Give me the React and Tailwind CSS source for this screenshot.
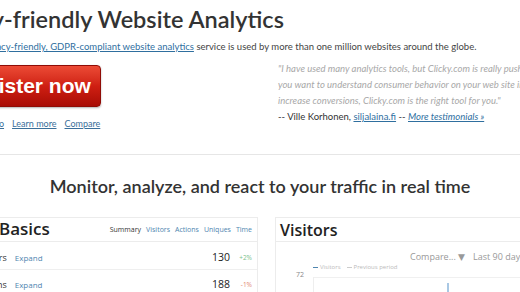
import React from "react";

const basics = [
    { label: "Visitors", value: 130, change: "+2%", up: true },
    { label: "Actions", value: 188, change: "-1%", up: false },
];

const tabs = ["Summary", "Visitors", "Actions", "Uniques", "Time"];

const App = () => {
    return (
        <div className="w-[520px] h-[292px] overflow-hidden bg-white text-[#333] font-['Lato','DejaVu_Sans',sans-serif]">
            {/* Hero */}
            <div className="h-[155px] border-b border-[#e6e6e6]">
                <h1 className="-ml-[72px] pt-[4px] text-[23.5px] leading-[30px] font-semibold text-[#333] whitespace-nowrap">
                    Privacy-friendly Website Analytics
                </h1>
                <p className="-ml-[38px] mt-[6px] text-[9.5px] leading-[14px] text-[#444] whitespace-nowrap">
                    <a href="#" className="text-[#2f6f9f] underline">Our privacy-friendly, GDPR-compliant website analytics</a>{" "}
                    service is used by more than one million websites around the globe.
                </p>

                <div className="flex mt-[7px]">
                    <div className="w-[278px] shrink-0">
                        <button className="mt-[4px] -ml-[56px] h-[42px] pl-[14px] pr-[9px] rounded-[4px] border border-[#8f0c06] bg-gradient-to-b from-[#ec4a35] via-[#cf1f12] to-[#a90c06] text-white text-[21px] font-bold font-['Liberation_Sans',sans-serif] shadow-[0_1px_2px_rgba(0,0,0,0.3)]">
                            Register now
                        </button>
                        <div className="-ml-[20px] mt-[10px] flex gap-[8px] text-[9px] text-[#3a6f9a]">
                            <a href="#" className="underline">Demo</a>
                            <a href="#" className="underline">Learn more</a>
                            <a href="#" className="underline">Compare</a>
                        </div>
                    </div>
                    <div className="text-[9.5px] leading-[16px] whitespace-nowrap">
                        <p className="italic text-[#a8a8a8]">
                            "I have used many analytics tools, but Clicky.com is really pushing the limits. If
                            <br />
                            you want to understand consumer behavior on your web site in order to
                            <br />
                            increase conversions, Clicky.com is the right tool for you."
                        </p>
                        <p className="text-[#333]">
                            -- Ville Korhonen, <a href="#" className="text-[#2f6f9f] underline">siljalaina.fi</a> --{" "}
                            <a href="#" className="italic text-[#2f6f9f] underline">More testimonials »</a>
                        </p>
                    </div>
                </div>
            </div>

            <h2 className="mt-[20px] text-center text-[18px] leading-[22px] font-semibold text-[#333]">
                Monitor, analyze, and react to your traffic in real time
            </h2>

            {/* Panels */}
            <div className="flex mt-[20px] gap-[17px]">
                <div className="-ml-[40px] w-[298px] shrink-0 border border-[#ececec] font-['Open_Sans','DejaVu_Sans',sans-serif]">
                    <div className="flex items-end justify-between h-[24px] pl-[38px] pr-[5px] pb-[2px] border-b border-[#ececec]">
                        <span className="text-[17px] leading-[20px] font-semibold text-[#222]">Basics</span>
                        <div className="flex gap-[5px] text-[7px] text-[#4f86b0] pb-[4px]">
                            {tabs.map((t, i) => (
                                <span key={t} className={i === 0 ? "text-[#333]" : ""}>{t}</span>
                            ))}
                        </div>
                    </div>
                    {basics.map((r, i) => (
                        <div key={r.label} className={"flex items-center h-[28px] pl-[15px] pr-[5px] " + (i === 0 ? "pt-[5px] border-b border-[#efefef]" : "pt-[1px]")}>
                            <span className="text-[9px] text-[#333]">{r.label}</span>
                            <span className="ml-[8px] text-[8px] text-[#4f86b0]">Expand</span>
                            <span className="ml-auto text-[10.5px] text-[#222]">{r.value}</span>
                            <span className={"w-[22px] text-right text-[6.5px] " + (r.up ? "text-[#7bbf8a]" : "text-[#e2876f]")}>{r.change}</span>
                        </div>
                    ))}
                </div>

                <div className="w-[300px] shrink-0 border border-[#ececec] font-['Open_Sans','DejaVu_Sans',sans-serif]">
                    <div className="h-[24px] px-[4px] border-b border-[#ececec]">
                        <span className="text-[16px] leading-[24px] font-semibold text-[#222]">Visitors</span>
                    </div>
                    <div className="relative h-[60px]">
                        <div className="absolute left-[134px] top-[8px] flex gap-[8px] text-[9px] text-[#999] whitespace-nowrap">
                            <span>Compare... ▼</span>
                            <span>Last 90 days</span>
                        </div>
                        <div className="absolute left-[37px] top-[21px] flex gap-[6px] text-[6px] text-[#bbb] whitespace-nowrap">
                            <span><span className="inline-block w-[5px] h-[1px] bg-[#4f86b0] align-middle mr-[2px]"></span>Visitors</span>
                            <span><span className="inline-block w-[5px] h-[1px] bg-[#ccc] align-middle mr-[2px]"></span>Previous period</span>
                        </div>
                        <span className="absolute left-[20px] top-[28px] text-[7px] text-[#888]">72</span>
                        <div className="absolute left-[37px] right-0 top-[35px] h-px bg-[#f0f0f0]"></div>
                        <div className="absolute left-[37px] top-[35px] bottom-0 w-px bg-[#eee]"></div>
                        <div className="absolute left-[171px] top-[41px] w-[2px] h-[12px] bg-[#a9c8e4]"></div>
                    </div>
                </div>
            </div>
        </div>
    );
};

export default App;
